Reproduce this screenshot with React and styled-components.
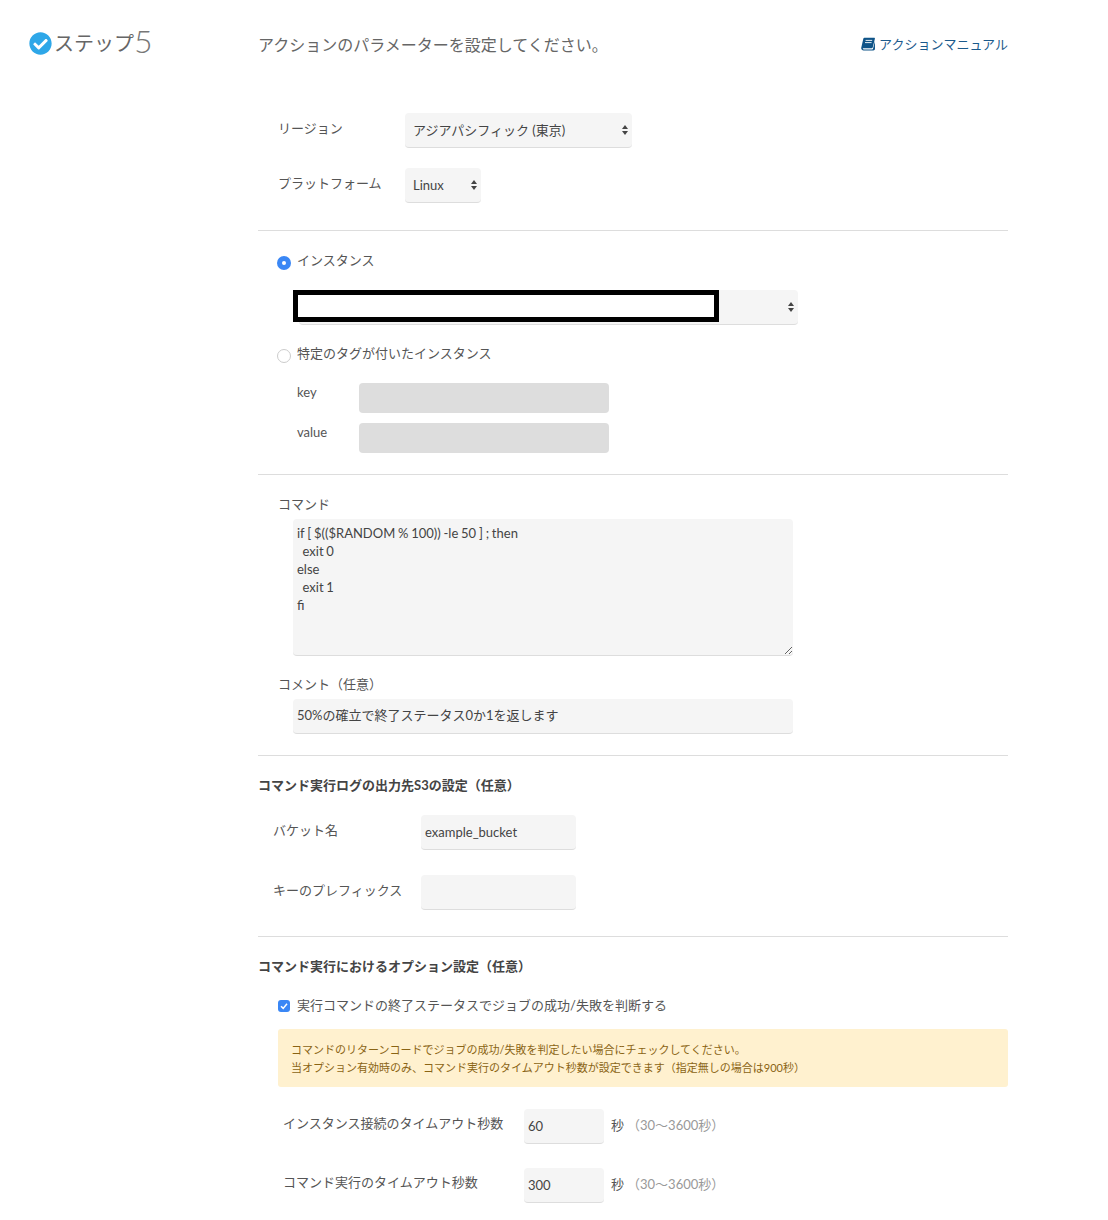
import React from 'react';
import styled, { createGlobalStyle } from 'styled-components';
import { FaCheckCircle } from 'react-icons/fa';

const font = `Lato, "Noto Sans CJK JP", sans-serif`;

const GlobalStyle = createGlobalStyle`
  html, body {
    margin: 0;
    padding: 0;
    background: #fff;
  }
  body {
    font-family: ${font};
    font-size: 13px;
    line-height: 18px;
    color: #555;
  }
`;

const Page = styled.div`
  display: grid;
  grid-template-columns: 258px 750px;
  width: 1108px;
  height: 1220px;
  overflow: hidden;
  box-sizing: border-box;
  padding-top: 25px;
`;

const StepTitle = styled.div`
  display: flex;
  align-items: center;
  height: 36px;
  padding-left: 29px;
  font-size: 20px;
  font-weight: 400;
  color: #666;
  svg {
    width: 23px;
    height: 23px;
    color: #2ea7e8;
    margin-right: 2px;
  }
`;

const StepNumber = styled.span`
  font-size: 32px;
  font-weight: 300;
  line-height: 36px;
  margin-top: -5px;
  color: #777;
`;

const Main = styled.div`
  display: flex;
  flex-direction: column;
`;

const Header = styled.div`
  display: flex;
  justify-content: space-between;
  align-items: center;
  height: 40px;
  margin-bottom: 48px;
`;

const Lead = styled.p`
  margin: 0;
  font-size: 16px;
  color: #666;
`;

const ManualLink = styled.a`
  display: flex;
  align-items: center;
  gap: 4px;
  margin-top: -2px;
  font-size: 13px;
  color: #1b5a8c;
  svg {
    width: 14px;
    height: 14px;
  }
`;

const Divider = styled.hr`
  border: 0;
  border-top: 1px solid #ddd;
  margin: ${(p) => p.$top}px 0 0;
  width: 100%;
`;

const FieldRow = styled.div`
  display: flex;
  align-items: flex-start;
  margin-top: ${(p) => p.$top || 0}px;
  padding-left: ${(p) => p.$indent || 0}px;
`;

const RowLabel = styled.label`
  width: ${(p) => p.$width}px;
  flex: none;
  padding-top: ${(p) => p.$pad ?? 7}px;
  color: #555;
`;

const SelectBox = styled.div`
  position: relative;
  width: ${(p) => p.$width}px;
  height: 35px;
  margin-top: ${(p) => p.$top || 0}px;
  margin-left: ${(p) => p.$left || 0}px;
  svg {
    position: absolute;
    right: 4px;
    top: 11px;
    pointer-events: none;
  }
`;

const Select = styled.select`
  appearance: none;
  display: block;
  box-sizing: border-box;
  width: 100%;
  height: 35px;
  padding: 0 8px;
  border: 0;
  border-bottom: 1px solid #ddd;
  border-radius: 4px;
  background: #f5f5f5;
  font-family: ${font};
  font-size: 13px;
  color: #444;
`;

const Redaction = styled.div`
  position: absolute;
  left: -6px;
  top: 0;
  width: 426px;
  height: 32px;
  box-sizing: border-box;
  border: 5px solid #000;
  background: #fff;
`;

const TextInput = styled.input`
  display: block;
  box-sizing: border-box;
  width: ${(p) => p.$width}px;
  height: ${(p) => p.$height || 35}px;
  padding: 0 4px ${(p) => p.$bottom || 0}px;
  border: 0;
  border-bottom: 1px solid #ddd;
  border-radius: 4px;
  background: #f5f5f5;
  font-family: ${font};
  font-size: 13px;
  color: #444;
  outline: none;
  &:disabled {
    background: #ddd;
    border-bottom: 0;
  }
`;

const TextArea = styled.textarea`
  display: block;
  box-sizing: border-box;
  width: 500px;
  height: 137px;
  margin: 6px 0 0 35px;
  padding: 5px 4px;
  border: 0;
  border-bottom: 1px solid #ddd;
  border-radius: 4px;
  background: #f5f5f5;
  font-family: ${font};
  font-size: 13px;
  line-height: 18px;
  word-spacing: -0.55px;
  color: #444;
  outline: none;
  resize: vertical;
`;

const RadioRow = styled.label`
  display: flex;
  align-items: flex-start;
  gap: 6px;
  margin: ${(p) => p.$top}px 0 0 19px;
`;

const Radio = styled.span`
  box-sizing: border-box;
  display: flex;
  align-items: center;
  justify-content: center;
  flex: none;
  width: 14px;
  height: 14px;
  margin-top: 5px;
  border-radius: 50%;
  border: ${(p) => (p.$on ? '0' : '1px solid #ccc')};
  background: ${(p) => (p.$on ? '#3a87f5' : '#fff')};
  &::after {
    content: '';
    display: ${(p) => (p.$on ? 'block' : 'none')};
    width: 4px;
    height: 4px;
    border-radius: 50%;
    background: #fff;
  }
`;

const Check = styled.span`
  display: flex;
  align-items: center;
  justify-content: center;
  flex: none;
  width: 12px;
  height: 12px;
  margin-top: 4px;
  border-radius: 3px;
  background: #3a87f5;
  svg {
    width: 10px;
    height: 10px;
  }
`;

const PlainLabel = styled.div`
  margin: ${(p) => p.$top}px 0 0 20px;
  color: #555;
`;

const IndentInput = styled.div`
  margin: 6px 0 0 35px;
`;

const SectionTitle = styled.h3`
  margin: 20px 0 0;
  font-size: 13px;
  line-height: 18px;
  font-weight: 700;
  color: #444;
`;

const CheckRow = styled.label`
  display: flex;
  align-items: flex-start;
  gap: 7px;
  margin: 21px 0 0 20px;
`;

const Notice = styled.div`
  box-sizing: border-box;
  height: 58px;
  margin: 15px 0 0 20px;
  padding: 12px 13px;
  border-radius: 3px;
  background: #fff1cf;
  color: #8a6414;
  font-size: 11px;
  line-height: 18px;
`;

const Unit = styled.span`
  margin-left: 7px;
  padding-top: 7px;
  color: #555;
`;

const Hint = styled.span`
  margin-left: 3px;
  padding-top: 7px;
  color: #999;
`;

const SortArrows = () => (
  <svg width="6" height="12" viewBox="0 0 6 12">
    <path d="M3 1 L6 5 H0 Z M3 11 L0 7 H6 Z" fill="#444" />
  </svg>
);

const BookIcon = () => (
  <svg viewBox="0 0 14 14">
    <path
      d="M3.4 0.8 H13.2 C13.7 0.8 14 1.2 13.9 1.7 L11.7 10.4 C11.6 10.9 11.2 11.2 10.7 11.2 H2.6 C1.9 11.2 1.7 11.6 1.9 12 C2 12.3 2.4 12.4 2.8 12.4 H11.2 C11.6 12.4 11.9 12.2 12 11.8 L13.9 4.2 L14 11.8 C13.9 12.8 13.2 13.4 12.3 13.4 H2.6 C1.3 13.4 0.2 12.4 0.2 11.2 C0.2 10.9 0.2 10.7 0.3 10.4 L2.3 1.8 C2.4 1.2 2.9 0.8 3.4 0.8 Z"
      fill="#0f5488"
    />
    <path d="M4.6 3.4 H11.2 M4 5.6 H10.6" fill="none" stroke="#fff" strokeWidth="0.9" />
  </svg>
);

const App = () => {
  return (
    <>
      <GlobalStyle />
      <Page>
        <StepTitle>
          <FaCheckCircle />
          ステップ<StepNumber>5</StepNumber>
        </StepTitle>
        <Main>
          <Header>
            <Lead>アクションのパラメーターを設定してください。</Lead>
            <ManualLink>
              <BookIcon />
              アクションマニュアル
            </ManualLink>
          </Header>

          <FieldRow $indent={20}>
            <RowLabel $width={127} $pad={6}>リージョン</RowLabel>
            <SelectBox $width={227}>
              <Select defaultValue="tokyo">
                <option value="tokyo">アジアパシフィック (東京)</option>
              </Select>
              <SortArrows />
            </SelectBox>
          </FieldRow>
          <FieldRow $top={20} $indent={20}>
            <RowLabel $width={127} $pad={6}>プラットフォーム</RowLabel>
            <SelectBox $width={76}>
              <Select defaultValue="linux">
                <option value="linux">Linux</option>
              </Select>
              <SortArrows />
            </SelectBox>
          </FieldRow>
          <Divider $top={27} />

          <RadioRow $top={20}>
            <Radio $on />
            インスタンス
          </RadioRow>
          <SelectBox $width={499} $left={41} $top={20}>
            <Select />
            <Redaction />
            <SortArrows />
          </SelectBox>
          <RadioRow $top={19}>
            <Radio />
            特定のタグが付いたインスタンス
          </RadioRow>
          <FieldRow $top={20} $indent={39}>
            <RowLabel $width={62} $pad={0}>key</RowLabel>
            <TextInput disabled $width={250} $height={30} />
          </FieldRow>
          <FieldRow $top={10} $indent={39}>
            <RowLabel $width={62} $pad={0}>value</RowLabel>
            <TextInput disabled $width={250} $height={30} />
          </FieldRow>
          <Divider $top={21} />

          <PlainLabel $top={20}>コマンド</PlainLabel>
          <TextArea
            spellCheck={false}
            defaultValue={'if [ $(($RANDOM % 100)) -le 50 ] ; then\n  exit 0\nelse\n  exit 1\nfi'}
          />
          <PlainLabel $top={19}>コメント（任意）</PlainLabel>
          <IndentInput>
            <TextInput $width={500} $bottom={4} defaultValue="50%の確立で終了ステータス0か1を返します" />
          </IndentInput>
          <Divider $top={21} />

          <SectionTitle>コマンド実行ログの出力先S3の設定（任意）</SectionTitle>
          <FieldRow $top={21} $indent={15}>
            <RowLabel $width={148} $pad={6}>バケット名</RowLabel>
            <TextInput $width={155} defaultValue="example_bucket" />
          </FieldRow>
          <FieldRow $top={25} $indent={15}>
            <RowLabel $width={148} $pad={6}>キーのプレフィックス</RowLabel>
            <TextInput $width={155} />
          </FieldRow>
          <Divider $top={26} />

          <SectionTitle>コマンド実行におけるオプション設定（任意）</SectionTitle>
          <CheckRow>
            <Check>
              <svg viewBox="0 0 10 10">
                <path d="M2 5.2 L4.2 7.4 L8 2.8" fill="none" stroke="#fff" strokeWidth="1.5" />
              </svg>
            </Check>
            実行コマンドの終了ステータスでジョブの成功/失敗を判断する
          </CheckRow>
          <Notice>
            コマンドのリターンコードでジョブの成功/失敗を判定したい場合にチェックしてください。
            <br />
            当オプション有効時のみ、コマンド実行のタイムアウト秒数が設定できます（指定無しの場合は900秒）
          </Notice>
          <FieldRow $top={22} $indent={25}>
            <RowLabel $width={241} $pad={5}>インスタンス接続のタイムアウト秒数</RowLabel>
            <TextInput $width={80} defaultValue="60" />
            <Unit>秒</Unit>
            <Hint>（30〜3600秒）</Hint>
          </FieldRow>
          <FieldRow $top={24} $indent={25}>
            <RowLabel $width={241} $pad={5}>コマンド実行のタイムアウト秒数</RowLabel>
            <TextInput $width={80} defaultValue="300" />
            <Unit>秒</Unit>
            <Hint>（30〜3600秒）</Hint>
          </FieldRow>
        </Main>
      </Page>
    </>
  );
};

export default App;
